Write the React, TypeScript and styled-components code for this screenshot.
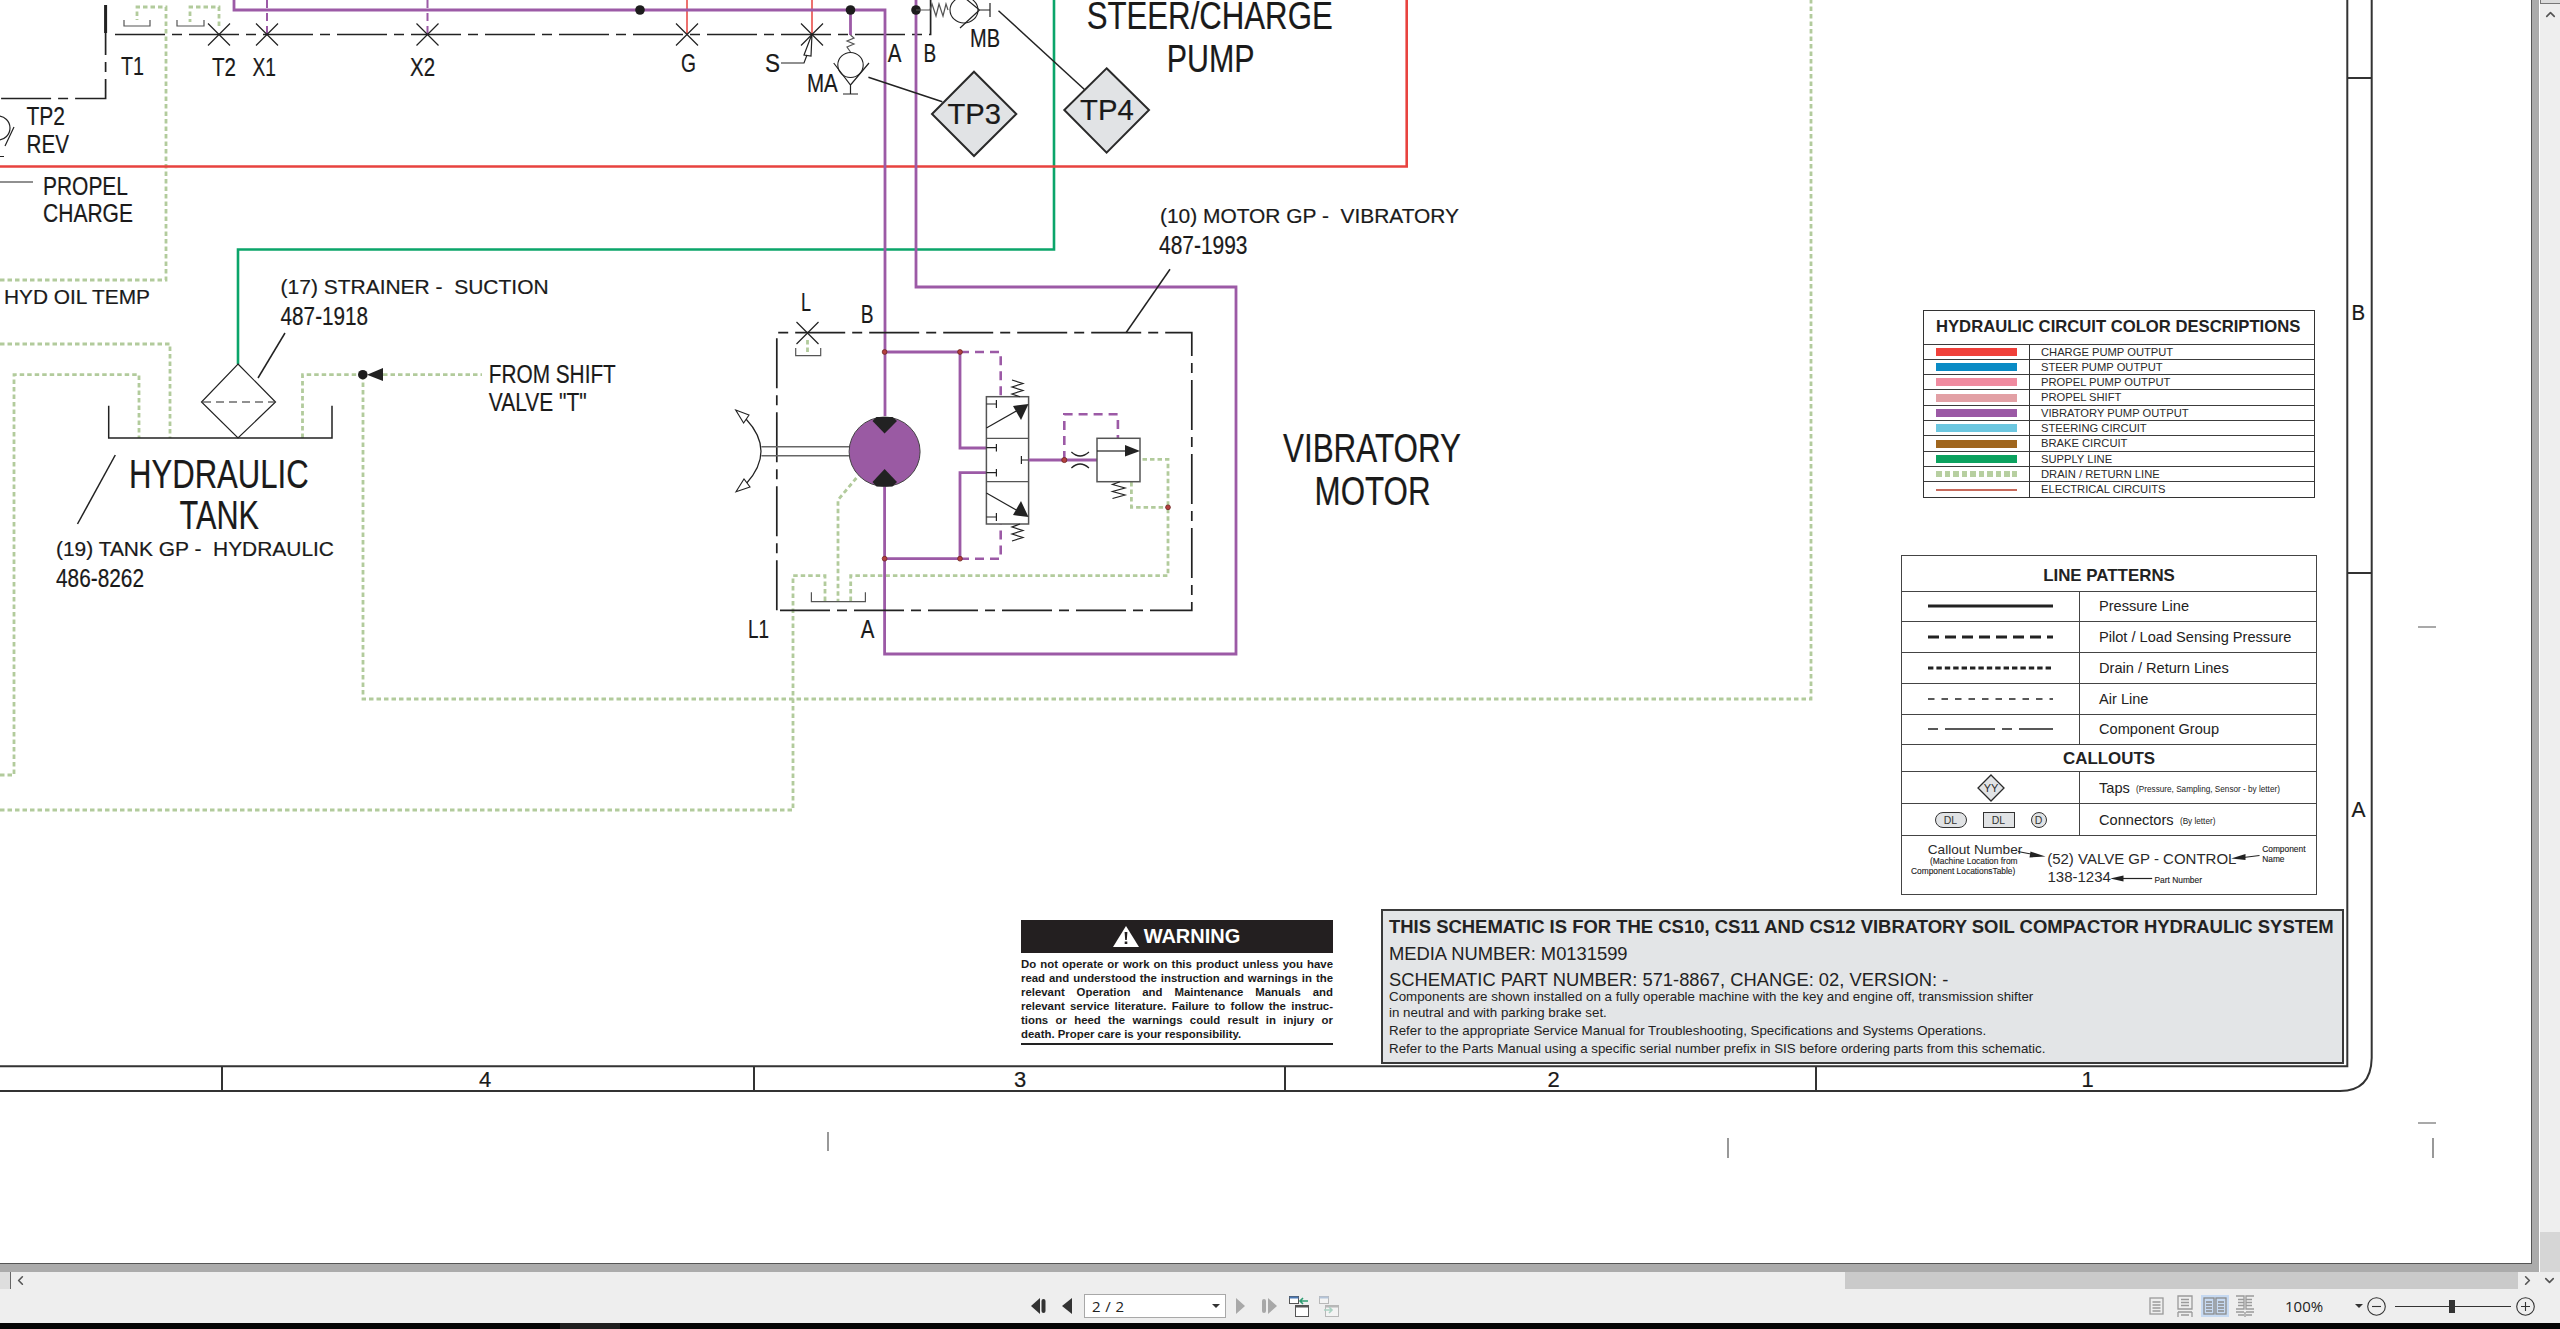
import React from "react";
import styled, { createGlobalStyle } from "styled-components";
import { ChevronLeft, ChevronRight, ChevronUp, ChevronDown } from "lucide-react";

const Global = createGlobalStyle`
  html, body { margin: 0; height: 100%; overflow: hidden; background: #000; }
  #root { height: 100%; }
  * { box-sizing: border-box; }
`;

const INK = "#232323";
const SANS = `"Liberation Sans", Arial, sans-serif`;

const Viewer = styled.div`
  height: 1329px;
  display: flex;
  flex-direction: column;
  font-family: ${SANS};
  color: ${INK};
`;
const Workspace = styled.div`
  height: 1272px;
  display: flex;
`;
const PageWell = styled.div`
  width: 2540px;
  background: #ababab;
  padding: 0 8px 8px 0;
  border-right: 1px solid #fff;
`;
const Sheet = styled.div`
  position: relative;
  width: 2532px;
  height: 1264px;
  background: #fff;
  border-right: 1px solid #555;
  border-bottom: 1px solid #555;
  overflow: hidden;
`;
const DrawingSvg = styled.svg`
  position: absolute;
  left: 0;
  top: 0;
`;

const VScroll = styled.div`
  width: 20px;
  background: #eeeeee;
  display: flex;
  flex-direction: column;
  align-items: center;
`;
const VNub = styled.div`
  width: 100%;
  height: 4px;
  background: #dcdcdc;
  border: 1px solid #777;
  border-top: 0;
  border-right: 0;
`;
const VThumb = styled.div`
  width: 100%;
  height: 40px;
  margin-top: auto;
  background: #d6d6d6;
`;
const ScrollArrow = styled.span`
  display: flex;
  color: #555;
  margin: ${(p: { $m?: string }) => p.$m || 0};
`;

const HScroll = styled.div`
  height: 17px;
  background: #eeeeee;
  display: flex;
  align-items: center;
`;
const HStub = styled.div`
  width: 11px;
  height: 17px;
  background: #dedede;
  border-right: 1px solid #666;
`;
const HThumb = styled.div`
  width: 673px;
  height: 17px;
  margin-left: auto;
  background: #cacaca;
`;
const HEnd = styled.div`
  width: 42px;
  height: 17px;
  display: flex;
  align-items: center;
  justify-content: space-between;
  padding-left: 2px;
`;

const StatusBar = styled.div`
  height: 34px;
  background: #eeeeee;
  display: flex;
  align-items: center;
`;
const NavGroup = styled.div`
  display: flex;
  align-items: center;
  margin-left: 1031px;
`;
const NavIcon = styled.svg<{ $m?: number }>`
  display: block;
  margin-left: ${(p) => p.$m || 0}px;
`;
const PageSelect = styled.div`
  width: 142px;
  height: 24px;
  margin-left: 12px;
  background: #fff;
  border: 1px solid #a8a8a8;
  display: flex;
  align-items: center;
  justify-content: space-between;
  padding: 0 5px 0 7px;
  font: 15px "Open Sans", sans-serif;
  color: #222;
  letter-spacing: 0.4px;
`;
const Caret = styled.span`
  width: 0;
  height: 0;
  border-left: 4px solid transparent;
  border-right: 4px solid transparent;
  border-top: 4px solid #333;
`;
const ViewGroup = styled.div`
  display: flex;
  align-items: center;
  margin-left: auto;
  padding-right: 25px;
`;
const ViewButton = styled.div<{ $active?: boolean; $m: number }>`
  width: ${(p) => (p.$active ? 28 : 20)}px;
  height: 22px;
  margin-left: ${(p) => p.$m}px;
  display: flex;
  align-items: center;
  justify-content: center;
  background: ${(p) => (p.$active ? "#c6d9f1" : "transparent")};
`;
const ZoomValue = styled.span`
  margin-left: 29px;
  width: 71px;
  padding-left: 1px;
  font: 15px "Open Sans", sans-serif;
  color: #222;
`;
const ZoomSlider = styled.div`
  position: relative;
  width: 116px;
  height: 1px;
  margin: 0 5px 0 9px;
  background: #333;
`;
const ZoomThumb = styled.div`
  position: absolute;
  left: 54px;
  top: -6px;
  width: 6px;
  height: 13px;
  background: #333;
`;
const ZoomDial = styled.svg`
  display: block;
`;
const BlackStrip = styled.div`
  height: 6px;
  background: #050505;
  display: flex;
`;
const StripTab = styled.div`
  width: 60px;
  margin-left: 560px;
  background: #1f1f1f;
`;

/* ----- schematic drawing parts ----- */
type PipeKind =
  | "pressure" | "pilot" | "branch" | "drain" | "charge" | "chargeThin"
  | "supply" | "group" | "ink" | "leader" | "frame" | "dashThin" | "shaft" | "hair";

const PIPES: Record<PipeKind, [string, number, string]> = {
  pressure: ["#9c5aa6", 2.8, "none"],
  pilot: ["#9c5aa6", 2.6, "9 6"],
  branch: ["#9c5aa6", 2, "8 5"],
  drain: ["#b2cb9c", 2.8, "4.5 3"],
  charge: ["#e8433f", 2.6, "none"],
  chargeThin: ["#e8433f", 1.5, "none"],
  supply: ["#0ba56a", 2.6, "none"],
  group: ["#222", 1.7, "50 7 10 7"],
  ink: ["#222", 1.2, "none"],
  leader: ["#222", 1.5, "none"],
  frame: ["#333", 2, "none"],
  dashThin: ["#222", 1.2, "8 5"],
  shaft: ["#666", 1.5, "none"],
  hair: ["#555", 1.2, "none"],
};
const Pipe = styled.path<{ $k: PipeKind }>`
  fill: none;
  stroke: ${(p) => PIPES[p.$k][0]};
  stroke-width: ${(p) => PIPES[p.$k][1]};
  stroke-dasharray: ${(p) => PIPES[p.$k][2]};
`;
const Label = styled.text.attrs({ lengthAdjust: "spacingAndGlyphs" as const })<{ $size: number }>`
  font-family: ${SANS};
  font-size: ${(p) => p.$size}px;
  fill: #1a1a1a;
  stroke: #1a1a1a;
  stroke-width: 0.2;
`;
const SmallLabel = styled.text`
  font-family: ${SANS};
  font-size: 8.4px;
  fill: #222;
  stroke: #222;
  stroke-width: 0.12;
`;
const Junction = styled.circle`
  fill: #1d1d1d;
`;
const Node = styled.circle`
  fill: #b5403f;
  stroke: #6d2522;
  stroke-width: 0.8;
`;
const Solid = styled.polygon`
  fill: #222;
`;
const Outline = styled.polygon`
  fill: #fff;
  stroke: #222;
  stroke-width: 1.1;
`;
const TapDiamond = styled.polygon`
  fill: #e1e3e5;
  stroke: #2a2a2a;
  stroke-width: 2;
`;
const ValveBody = styled.rect`
  fill: #fff;
  stroke: #555;
  stroke-width: 1.5;
`;
const MotorBody = styled.ellipse`
  fill: #9a5aa3;
  stroke: #444;
  stroke-width: 1;
`;
const GaugeBody = styled.ellipse`
  fill: #fff;
  stroke: #222;
  stroke-width: 1.1;
`;

const Cross = ({ x, y }: { x: number; y: number }) => (
  <Pipe $k="ink" d={`M${x - 11} ${y - 11}L${x + 11} ${y + 11}M${x + 11} ${y - 11}L${x - 11} ${y + 11}`} />
);
const Tray = ({ l, r, t, b }: { l: number; r: number; t: number; b: number }) => (
  <Pipe $k="hair" d={`M${l} ${t}V${b}H${r}V${t}`} />
);

const Schematic = () => (
  <DrawingSvg width={2532} height={1264} viewBox="0 0 2532 1264">
    {/* drain network */}
    <Pipe $k="drain" d="M0 280H166V7H137V20" />
    <Pipe $k="drain" d="M219 26V7H190V22" />
    <Pipe $k="drain" d="M0 344H170V438" />
    <Pipe $k="drain" d="M0 775H14V374.7H139V438" />
    <Pipe $k="drain" d="M302.5 438V374.7H363" />
    <Pipe $k="drain" d="M383 374.7H482" />
    <Pipe $k="drain" d="M363 375V699H1811V0" />
    <Pipe $k="drain" d="M0 810H793V575.7H825V601" />
    <Pipe $k="drain" d="M850.7 601V575.7H1168V459.3H1140" />
    <Pipe $k="drain" d="M1131.4 482V507.3H1168" />
    <Pipe $k="drain" d="M856.4 478L838 500V601" />
    <Pipe $k="drain" d="M807.5 340V355" />

    {/* supply, charge */}
    <Pipe $k="supply" d="M238 364V249.5H1054V0" />
    <Pipe $k="charge" d="M0 166.5H1406.7V0" />
    <Pipe $k="chargeThin" d="M687 0V34M812 0V34" />

    {/* top component group */}
    <Pipe $k="group" d="M105.6 5V98.5H0" />
    <Pipe $k="leader" d="M105.6 5V33" style={{ strokeWidth: 3 }} />
    <Pipe $k="group" d="M115 34.5H930.6V0" />

    {/* vibratory circuit */}
    <Pipe $k="branch" d="M267 0V34M427.5 0V34" />
    <Pipe $k="pressure" d="M234 0V10H885V416" />
    <Pipe $k="pressure" d="M916 0V287H1236V654H884.6V486" />
    <Pipe $k="pressure" d="M850.5 10V35" />
    <Junction cx={640} cy={10} r={4.8} />
    <Junction cx={850.5} cy={10} r={4.8} />
    <Junction cx={916} cy={10} r={4.8} />

    {[219, 267, 427.5, 687, 812].map((x) => (
      <Cross key={x} x={x} y={34.5} />
    ))}
    <Tray l={124} r={150} t={20} b={26} />
    <Tray l={177} r={204} t={20} b={26} />

    {/* S port arrow */}
    <Pipe $k="ink" d="M781 63H804L807 55" />
    <Pipe $k="ink" d="M812 34L804 55L811 56Z" />

    {/* MA gauge */}
    <Pipe $k="hair" d="M850.5 35L854 38L847 41L854 44L847 47L850.5 52" />
    <GaugeBody cx={850.5} cy={65} rx={12.7} ry={12.5} />
    <Pipe $k="ink" d="M833.7 63L850.5 85L869 63M850.5 85V94M843 94H858" />

    {/* MB gauge */}
    <Pipe $k="hair" d="M916 10H930L932 4L936 16L939 4L943 16L946 4L948 10" />
    <GaugeBody cx={964} cy={10} rx={14} ry={13} />
    <Pipe $k="ink" d="M960 -6L979.5 10L960 28M979.5 10H990M990 3V17" />

    {/* test point callouts */}
    <Pipe $k="leader" d="M868.4 77.3L942.3 101.7" />
    <Pipe $k="leader" d="M998.5 10.7L1085 90" />
    <TapDiamond points="974,71.7 1016.3,114 974,156 932,114" />
    <TapDiamond points="1106.6,68.3 1149,110 1106.6,152.7 1064.3,110" />

    {/* TP2 */}
    <Pipe $k="ink" d="M-2 116A12 12 0 0 1 -2 140M14 127L5 146M0 156.5H4" />
    <Pipe $k="ink" d="M0 182H33" />

    {/* hydraulic tank and strainer */}
    <Pipe $k="leader" d="M285 333L258 378" />
    <Pipe $k="ink" d="M238 364L275.5 402L238 438L201.5 402Z" />
    <Pipe $k="dashThin" d="M203 402H274" />
    <Pipe $k="leader" d="M108.7 405.7V438H332V405.7" />
    <Pipe $k="leader" d="M115.3 455L77.5 524" />
    <Junction cx={362.8} cy={374.7} r={4.8} />
    <Solid points="367,374.7 383,368 383,381" />

    {/* motor group */}
    <Pipe $k="leader" d="M1170 269.3L1126 332.7" />
    <Pipe $k="group" d="M776.8 610.3V332.7H1191.8V610.3Z" />
    <Cross x={807.5} y={333} />
    <Tray l={795.7} r={820.7} t={348} b={355.7} />
    <Tray l={811.4} r={865.4} t={592.3} b={601.6} />

    <Pipe $k="shaft" d="M761.4 446.7H850M761.4 455.7H850" />
    <Pipe $k="ink" d="M746 419Q776 451 746 484" />
    <Outline points="735.7,410 749,415 743.6,423" />
    <Outline points="736,491.7 744,479 750,487" />

    <Pipe $k="pressure" d="M884.6 352H960V448H986.4" />
    <Pipe $k="pressure" d="M884.6 558.7H960V472.7H986.4" />
    <Pipe $k="pilot" d="M960 352H1000.7V396.7" />
    <Pipe $k="pilot" d="M960 558.7H1000.7V524" />

    <MotorBody cx={884.6} cy={451.7} rx={35.5} ry={34.7} />
    <Solid points="876.5,417 892.5,417 897,421 884.6,433.5 872.5,421" />
    <Solid points="872.5,482 884.6,469 897,482 892.5,486.5 876.5,486.5" />

    {/* directional valve */}
    <ValveBody x={986.4} y={396.7} width={42.2} height={127.3} />
    <Pipe $k="hair" d="M986.4 438.3H1028.6M986.4 481.7H1028.6" />
    <Pipe $k="ink" d="M986.4 428L1018 410" />
    <Solid points="1028.5,404 1021,420 1013,406" />
    <Pipe $k="ink" d="M986.4 493L1018 511" />
    <Solid points="1028.5,517 1013,515 1021,501" />
    <Pipe $k="ink" d="M986.4 404H996.4M996.4 400V408M986.4 447.7H996.4M996.4 444V451.5M986.4 472.7H996.4M996.4 469V476.5M986.4 517H996.4M996.4 513V521M1028.6 460H1021.4M1021.4 456V464" />
    <Pipe $k="ink" d="M1012 380L1023 383.5L1012 387L1023 390.5L1012 394L1020 396.7" />
    <Pipe $k="ink" d="M1020 524L1012 527L1023 530.5L1012 534L1023 537.5L1012 541" />

    {/* relief valve */}
    <Pipe $k="pressure" d="M1028.6 460H1097" />
    <Pipe $k="pilot" d="M1064.3 460V414.3H1117.9V438.3" />
    <Pipe $k="ink" d="M1071.4 452Q1080 460 1089 452M1071.4 468Q1080 460 1089 468" />
    <ValveBody x={1097} y={438.3} width={43} height={43.4} />
    <Pipe $k="ink" d="M1097 451H1126" />
    <Solid points="1140,451 1125,445 1125,456.5" />
    <Pipe $k="ink" d="M1120 481.7L1112.5 484.5L1125 488L1112.5 491.5L1125 495L1112.5 498.5" />

    <Node cx={884.6} cy={352} r={2.4} />
    <Node cx={960} cy={352} r={2.4} />
    <Node cx={884.6} cy={558.7} r={2.4} />
    <Node cx={960} cy={558.7} r={2.4} />
    <Node cx={1064.3} cy={460} r={2.6} />
    <Node cx={1168} cy={507.3} r={2.4} />

    {/* sheet frame */}
    <Pipe $k="frame" d="M2347.3 0V1066.3H0" />
    <Pipe $k="frame" d="M2371.7 0V1058Q2371 1091 2340 1091H0" />
    <Pipe $k="frame" d="M2347.3 78H2371.7M2347.3 573H2371.7" />
    <Pipe $k="frame" d="M222 1066V1091M754 1066V1091M1285 1066V1091M1816 1066V1091" />

    {/* registration ticks */}
    <Pipe $k="hair" d="M828 1132V1151M1728 1138V1158M2433 1138V1158M2418 627H2436M2418 1123H2436" />

    {/* labels */}
    <Label x={121} y={75} $size={26} textLength={23}>T1</Label>
    <Label x={212} y={76} $size={26} textLength={24}>T2</Label>
    <Label x={252.5} y={76} $size={26} textLength={23.5}>X1</Label>
    <Label x={410} y={76} $size={26} textLength={25}>X2</Label>
    <Label x={681} y={72} $size={26} textLength={15}>G</Label>
    <Label x={765} y={72} $size={26} textLength={15}>S</Label>
    <Label x={26.5} y={125} $size={26} textLength={38.5}>TP2</Label>
    <Label x={26.5} y={153} $size={26} textLength={42.5}>REV</Label>
    <Label x={43} y={195} $size={26} textLength={85}>PROPEL</Label>
    <Label x={43} y={222} $size={26} textLength={90}>CHARGE</Label>
    <Label x={4} y={304} $size={21} textLength={146}>HYD OIL TEMP</Label>
    <Label x={280.6} y={294} $size={21} textLength={268} xmlSpace="preserve">(17) STRAINER -  SUCTION</Label>
    <Label x={280.6} y={325} $size={25.5} textLength={87.5}>487-1918</Label>
    <Label x={488.8} y={382.7} $size={26} textLength={127}>FROM SHIFT</Label>
    <Label x={488.8} y={410.7} $size={26} textLength={98}>VALVE "T"</Label>
    <Label x={129} y={487.7} $size={40} textLength={179.7}>HYDRAULIC</Label>
    <Label x={179.6} y={529.3} $size={40} textLength={79.4}>TANK</Label>
    <Label x={56} y={556} $size={21} textLength={278} xmlSpace="preserve">(19) TANK GP -  HYDRAULIC</Label>
    <Label x={56} y={587} $size={25.5} textLength={88}>486-8262</Label>
    <Label x={748} y={638} $size={26} textLength={21}>L1</Label>
    <Label x={860.7} y={638.3} $size={26} textLength={13.6}>A</Label>
    <Label x={801} y={310.7} $size={26} textLength={10}>L</Label>
    <Label x={860.7} y={323} $size={26} textLength={12.8}>B</Label>
    <Label x={887.8} y={61.7} $size={26} textLength={13.7}>A</Label>
    <Label x={923.5} y={61.7} $size={26} textLength={12.7}>B</Label>
    <Label x={807} y={92.3} $size={26} textLength={30.8}>MA</Label>
    <Label x={970} y={47} $size={26} textLength={30}>MB</Label>
    <Label x={947.4} y={124} $size={30} textLength={53.6}>TP3</Label>
    <Label x={1080} y={120} $size={30} textLength={53.7}>TP4</Label>
    <Label x={1086.7} y={29} $size={38.5} textLength={246}>STEER/CHARGE</Label>
    <Label x={1166.8} y={72.3} $size={38.5} textLength={87.8}>PUMP</Label>
    <Label x={1160} y={222.7} $size={21} textLength={299} xmlSpace="preserve">(10) MOTOR GP -  VIBRATORY</Label>
    <Label x={1159} y={254} $size={25.5} textLength={88.5}>487-1993</Label>
    <Label x={1283} y={462} $size={40} textLength={178}>VIBRATORY</Label>
    <Label x={1314.6} y={504.6} $size={40} textLength={116}>MOTOR</Label>
    <Label x={2351.4} y={320} $size={22} textLength={13.6}>B</Label>
    <Label x={2351.4} y={817} $size={22} textLength={14}>A</Label>
    <Label x={485} y={1086.7} $size={22} textAnchor="middle">4</Label>
    <Label x={1020} y={1086.7} $size={22} textAnchor="middle">3</Label>
    <Label x={1553.6} y={1086.7} $size={22} textAnchor="middle">2</Label>
    <Label x={2087.5} y={1086.7} $size={22} textAnchor="middle">1</Label>
  </DrawingSvg>
);

/* ----- colour legend ----- */
const ColorTable = styled.div`
  position: absolute;
  left: 1923px;
  top: 310px;
  width: 392px;
  height: 188px;
  border: 1.5px solid #333;
  background: #fff;
`;
const ColorTitle = styled.div`
  height: 32.5px;
  line-height: 32px;
  padding-left: 12px;
  font-weight: 700;
  font-size: 16.65px;
  color: #222;
  white-space: nowrap;
`;
const ColorRow = styled.div`
  height: 15.33px;
  display: grid;
  grid-template-columns: 106px 1fr;
  border-top: 1.5px solid #3c3c3c;
`;
const SwatchCell = styled.div`
  display: flex;
  align-items: center;
  padding-left: 11.5px;
  border-right: 1.2px solid #333;
`;
const Swatch = styled.div<{ $color: string; $kind?: "drain" | "wire" }>`
  width: 81px;
  height: ${(p) => (p.$kind === "wire" ? 2 : p.$kind === "drain" ? 6 : 8)}px;
  background: ${(p) =>
    p.$kind === "drain"
      ? `repeating-linear-gradient(90deg, ${p.$color} 0 5.5px, transparent 5.5px 8.5px)`
      : p.$color};
`;
const ColorName = styled.div`
  padding-left: 11px;
  font-size: 11.2px;
  line-height: 14px;
  color: #2a2a2a;
  white-space: nowrap;
`;

const COLOR_ROWS: { c: string; n: string; k?: "drain" | "wire" }[] = [
  { c: "#f0403a", n: "CHARGE PUMP OUTPUT" },
  { c: "#0a8bc5", n: "STEER PUMP OUTPUT" },
  { c: "#f08ba0", n: "PROPEL PUMP OUTPUT" },
  { c: "#e2a0a5", n: "PROPEL SHIFT" },
  { c: "#9b59a5", n: "VIBRATORY PUMP OUTPUT" },
  { c: "#6cc7e0", n: "STEERING CIRCUIT" },
  { c: "#a0661e", n: "BRAKE CIRCUIT" },
  { c: "#0ba25f", n: "SUPPLY LINE" },
  { c: "#b7cfa0", n: "DRAIN / RETURN LINE", k: "drain" },
  { c: "#c76a5c", n: "ELECTRICAL CIRCUITS", k: "wire" },
];

/* ----- line pattern legend ----- */
const PatternTable = styled.div`
  position: absolute;
  left: 1901px;
  top: 555px;
  width: 416px;
  height: 340px;
  border: 1.5px solid #444;
  background: #fff;
`;
const PatternHeading = styled.div<{ $h: number }>`
  height: ${(p) => p.$h}px;
  line-height: ${(p) => (p.$h < 30 ? p.$h + 1 : p.$h + 5)}px;
  text-align: center;
  font-weight: 700;
  font-size: 16.9px;
  color: #222;
  border-top: ${(p) => (p.$h < 30 ? "1.5px solid #444" : "0")};
`;
const PatternRow = styled.div<{ $h: number }>`
  height: ${(p) => p.$h}px;
  display: grid;
  grid-template-columns: 178px 1fr;
  border-top: 1.5px solid #444;
`;
const SymbolCell = styled.div`
  display: flex;
  align-items: center;
  justify-content: center;
  gap: 16px;
  border-right: 1.5px solid #444;
`;
const PatternName = styled.div`
  display: flex;
  align-items: center;
  gap: 4px;
  padding-left: 19px;
  font-size: 14.6px;
  color: #222;
  white-space: nowrap;
`;
const Fine = styled.span`
  font-size: 8.2px;
  padding-top: 3px;
  color: #222;
`;
const ConnectorPill = styled.div`
  width: 32px;
  height: 16px;
  border: 1.2px solid #333;
  border-radius: 8px;
  background: #e1e3e5;
  font-size: 10.5px;
  line-height: 14px;
  text-align: center;
  color: #333;
`;
const ConnectorBox = styled(ConnectorPill)`
  border-radius: 0;
`;
const ConnectorRound = styled(ConnectorPill)`
  width: 16px;
  border-radius: 50%;
  margin-left: 0;
`;
const PatternLine = ({ w, dash }: { w: number; dash?: string }) => (
  <svg width={125} height={6}>
    <line x1={0} x2={125} y1={3} y2={3} stroke="#222" strokeWidth={w} strokeDasharray={dash || "none"} />
  </svg>
);
const CalloutRow = styled.div`
  height: 58px;
  border-top: 1.5px solid #444;
`;
const CalloutText = styled.text<{ $size: number }>`
  font-family: ${SANS};
  font-size: ${(p) => p.$size}px;
  fill: #2a2a2a;
`;

/* ----- warning ----- */
const WarningPlate = styled.div`
  position: absolute;
  left: 1021px;
  top: 920px;
  width: 312px;
`;
const WarningHead = styled.div`
  height: 33px;
  background: #231f20;
  color: #fff;
  display: flex;
  align-items: center;
  justify-content: center;
  gap: 5px;
  font-weight: 700;
  font-size: 20px;
  padding-right: 1px;
`;
const WarningBody = styled.div`
  padding-top: 4px;
  padding-bottom: 2px;
  border-bottom: 2px solid #222;
  font-weight: 700;
  font-size: 11.4px;
  line-height: 14px;
  color: #1a1a1a;
`;
const WarningLine = styled.div<{ $last?: boolean }>`
  text-align: justify;
  text-align-last: ${(p) => (p.$last ? "left" : "justify")};
`;

/* ----- title note ----- */
const NotePlate = styled.div`
  position: absolute;
  left: 1381px;
  top: 909px;
  width: 963px;
  height: 155px;
  background: #e3e5e7;
  border: 2px solid #3a3a3a;
  padding: 7px 0 0 6px;
  color: #222;
  white-space: nowrap;
`;
const NoteTitle = styled.div`
  font-weight: 700;
  font-size: 18.47px;
  line-height: 18.5px;
`;
const NoteBig = styled.div<{ $m: number }>`
  font-size: 18.35px;
  line-height: 22px;
  margin-top: ${(p) => p.$m}px;
`;
const NoteSmall = styled.div<{ $m: number }>`
  font-size: 13.33px;
  line-height: 16px;
  margin-top: ${(p) => p.$m}px;
`;

/* ----- toolbar glyphs ----- */
const PageGlyph = ({ kind }: { kind: 1 | 2 | 3 | 4 }) => {
  const c = "#9a9a9a";
  if (kind === 1)
    return (
      <svg width={15} height={18} fill="none" stroke={c} strokeWidth={1.3}>
        <rect x={1} y={1} width={13} height={16} />
        <path d="M3.5 5H11.5M3.5 8H11.5M3.5 11H11.5M3.5 14H11.5" />
      </svg>
    );
  if (kind === 2)
    return (
      <svg width={16} height={22} fill="none" stroke={c} strokeWidth={1.3}>
        <path d="M1 1H15V14H1ZM4 4.5H12M4 7.5H12M4 10.5H12M1 17H15M1 17V22M15 17V22M4 20H12" />
      </svg>
    );
  if (kind === 3)
    return (
      <svg width={24} height={18} fill="none" stroke="#8a8a8a" strokeWidth={1.3}>
        <rect x={1} y={1} width={10} height={16} />
        <rect x={13} y={1} width={10} height={16} />
        <path d="M3 5H9M3 8H9M3 11H9M3 14H9M15 5H21M15 8H21M15 11H21M15 14H21" />
      </svg>
    );
  return (
    <svg width={20} height={22} fill="none" stroke={c} strokeWidth={1.3}>
      <path d="M1 1H9V14H1M19 1H11V14H19M3 4.5H9M3 7.5H9M3 10.5H9M11 4.5H17M11 7.5H17M11 10.5H17M1 17H9M11 17H19M10 17V22M3 20H9M11 20H17" />
    </svg>
  );
};

const ViewSwap = ({ faded, m }: { faded?: boolean; m: number }) => (
  <NavIcon $m={m} width={20} height={21} viewBox="0 0 20 21" style={{ opacity: faded ? 0.35 : 1 }}>
    <rect x={0.5} y={0.5} width={9} height={7} fill="#fff" stroke="#555" />
    <rect x={0.5} y={0.5} width={9} height={2} fill="#4a78b5" />
    <rect x={6.5} y={9.5} width={13} height={11} fill="#fff" stroke="#555" />
    <rect x={6.5} y={9.5} width={13} height={2} fill="#555" />
    <path d={faded ? "M5 14H13M10 11L13 14L10 17" : "M19 5H11M14 2L11 5L14 8"} fill="none" stroke="#2f9e73" strokeWidth={1.6} />
  </NavIcon>
);

export default function App() {
  return (
    <Viewer>
      <Global />
      <Workspace>
        <PageWell>
          <Sheet>
            <Schematic />

            <ColorTable>
              <ColorTitle>HYDRAULIC CIRCUIT COLOR DESCRIPTIONS</ColorTitle>
              {COLOR_ROWS.map((r) => (
                <ColorRow key={r.n}>
                  <SwatchCell>
                    <Swatch $color={r.c} $kind={r.k} />
                  </SwatchCell>
                  <ColorName>{r.n}</ColorName>
                </ColorRow>
              ))}
            </ColorTable>

            <PatternTable>
              <PatternHeading $h={34.5}>LINE PATTERNS</PatternHeading>
              <PatternRow $h={30.3}>
                <SymbolCell><PatternLine w={3} /></SymbolCell>
                <PatternName>Pressure Line</PatternName>
              </PatternRow>
              <PatternRow $h={31}>
                <SymbolCell><PatternLine w={3} dash="11 6" /></SymbolCell>
                <PatternName>Pilot / Load Sensing Pressure</PatternName>
              </PatternRow>
              <PatternRow $h={31}>
                <SymbolCell><PatternLine w={3} dash="5.4 3" /></SymbolCell>
                <PatternName>Drain / Return Lines</PatternName>
              </PatternRow>
              <PatternRow $h={31}>
                <SymbolCell><PatternLine w={1.3} dash="6.5 7" /></SymbolCell>
                <PatternName>Air Line</PatternName>
              </PatternRow>
              <PatternRow $h={30}>
                <SymbolCell><PatternLine w={1.6} dash="10 7 50 7" /></SymbolCell>
                <PatternName>Component Group</PatternName>
              </PatternRow>
              <PatternHeading $h={27.4}>CALLOUTS</PatternHeading>
              <PatternRow $h={32.3}>
                <SymbolCell>
                  <svg width={30} height={30} viewBox="0 0 30 30">
                    <TapDiamond points="15,2 28,15 15,28 2,15" style={{ strokeWidth: 1.3 }} />
                    <CalloutText x={15} y={19} $size={11} textAnchor="middle">YY</CalloutText>
                  </svg>
                </SymbolCell>
                <PatternName>Taps<Fine>&nbsp;(Pressure, Sampling, Sensor - by letter)</Fine></PatternName>
              </PatternRow>
              <PatternRow $h={32}>
                <SymbolCell>
                  <ConnectorPill>DL</ConnectorPill>
                  <ConnectorBox>DL</ConnectorBox>
                  <ConnectorRound>D</ConnectorRound>
                </SymbolCell>
                <PatternName>Connectors<Fine>&nbsp;(By letter)</Fine></PatternName>
              </PatternRow>
              <CalloutRow>
                <svg width={413} height={56} viewBox="1902.5 837.5 413 56">
                  <CalloutText x={1928.3} y={855} $size={13.6}>Callout Number</CalloutText>
                  <SmallLabel x={1930.5} y={865}>(Machine Location from</SmallLabel>
                  <SmallLabel x={1911.5} y={875}>Component LocationsTable)</SmallLabel>
                  <CalloutText x={2047.7} y={865} $size={15}>(52) VALVE GP - CONTROL</CalloutText>
                  <CalloutText x={2048} y={883} $size={15}>138-1234</CalloutText>
                  <SmallLabel x={2262.7} y={853.7}>Component</SmallLabel>
                  <SmallLabel x={2262.7} y={863.7}>Name</SmallLabel>
                  <SmallLabel x={2155} y={884}>Part Number</SmallLabel>
                  <Pipe $k="ink" d="M2018.3 853L2034 856" />
                  <Solid points="2046,858 2031,853 2030,859" />
                  <Pipe $k="ink" d="M2260 857L2244 859" />
                  <Solid points="2231.7,860 2246,855.5 2246,861.5" />
                  <Pipe $k="ink" d="M2152.7 880H2122" />
                  <Solid points="2110.7,880 2124,877 2124,883" />
                </svg>
              </CalloutRow>
            </PatternTable>

            <WarningPlate>
              <WarningHead>
                <svg width={26} height={21} viewBox="0 0 26 21">
                  <path d="M13 0L26 21H0Z" fill="#fff" />
                  <path d="M11.6 6H14.4L13.8 14H12.2ZM11.7 15.5H14.3V18H11.7Z" fill="#231f20" />
                </svg>
                WARNING
              </WarningHead>
              <WarningBody>
                <WarningLine>Do not operate or work on this product unless you have</WarningLine>
                <WarningLine>read and understood the instruction and warnings in the</WarningLine>
                <WarningLine>relevant Operation and Maintenance Manuals and</WarningLine>
                <WarningLine>relevant service literature. Failure to follow the instruc-</WarningLine>
                <WarningLine>tions or heed the warnings could result in injury or</WarningLine>
                <WarningLine $last>death. Proper care is your responsibility.</WarningLine>
              </WarningBody>
            </WarningPlate>

            <NotePlate>
              <NoteTitle>THIS SCHEMATIC IS FOR THE CS10, CS11 AND CS12 VIBRATORY SOIL COMPACTOR HYDRAULIC SYSTEM</NoteTitle>
              <NoteBig $m={6.8}>MEDIA NUMBER: M0131599</NoteBig>
              <NoteBig $m={3.7}>SCHEMATIC PART NUMBER: 571-8867, CHANGE: 02, VERSION: -</NoteBig>
              <NoteSmall $m={-2}>Components are shown installed on a fully operable machine with the key and engine off, transmission shifter</NoteSmall>
              <NoteSmall $m={0}>in neutral and with parking brake set.</NoteSmall>
              <NoteSmall $m={2.4}>Refer to the appropriate Service Manual for Troubleshooting, Specifications and Systems Operations.</NoteSmall>
              <NoteSmall $m={1.7}>Refer to the Parts Manual using a specific serial number prefix in SIS before ordering parts from this schematic.</NoteSmall>
            </NotePlate>
          </Sheet>
        </PageWell>
        <VScroll>
          <VNub />
          <ScrollArrow $m="3px 0 0 0"><ChevronUp size={15} strokeWidth={2.6} /></ScrollArrow>
          <VThumb />
        </VScroll>
      </Workspace>

      <HScroll>
        <HStub />
        <ScrollArrow $m="0 0 0 2px"><ChevronLeft size={15} strokeWidth={2.6} /></ScrollArrow>
        <HThumb />
        <HEnd>
          <ScrollArrow><ChevronRight size={15} strokeWidth={2.6} /></ScrollArrow>
          <ScrollArrow $m="0 3px 0 0"><ChevronDown size={15} strokeWidth={2.6} /></ScrollArrow>
        </HEnd>
      </HScroll>

      <StatusBar>
        <NavGroup>
          <NavIcon width={15} height={16} viewBox="0 0 15 16">
            <path d="M0 8L9 0V16Z" fill="#333" />
            <rect x={10.5} y={1} width={4} height={14} rx={2} fill="#333" />
          </NavIcon>
          <NavIcon $m={16} width={10} height={16} viewBox="0 0 10 16">
            <path d="M0 8L10 0V16Z" fill="#333" />
          </NavIcon>
          <PageSelect>
            2 / 2
            <Caret />
          </PageSelect>
          <NavIcon $m={10} width={9} height={16} viewBox="0 0 9 16">
            <path d="M9 8L0 0V16Z" fill="#a8a8a8" />
          </NavIcon>
          <NavIcon $m={17} width={15} height={16} viewBox="0 0 15 16">
            <rect x={0} y={1} width={4} height={14} rx={2} fill="#a8a8a8" />
            <path d="M15 8L6 0V16Z" fill="#a8a8a8" />
          </NavIcon>
          <ViewSwap m={12} />
          <ViewSwap m={10} faded />
        </NavGroup>
        <ViewGroup>
          <ViewButton $m={0}><PageGlyph kind={1} /></ViewButton>
          <ViewButton $m={9}><PageGlyph kind={2} /></ViewButton>
          <ViewButton $m={6} $active><PageGlyph kind={3} /></ViewButton>
          <ViewButton $m={6}><PageGlyph kind={4} /></ViewButton>
          <ZoomValue>100%</ZoomValue>
          <Caret />
          <ZoomDial width={19} height={19} viewBox="0 0 19 19" style={{ marginLeft: 4 }}>
            <circle cx={9.5} cy={9.5} r={8.8} fill="none" stroke="#333" strokeWidth={1.1} />
            <path d="M5 9.5H14" stroke="#333" strokeWidth={1.1} />
          </ZoomDial>
          <ZoomSlider><ZoomThumb /></ZoomSlider>
          <ZoomDial width={19} height={19} viewBox="0 0 19 19">
            <circle cx={9.5} cy={9.5} r={8.8} fill="none" stroke="#333" strokeWidth={1.1} />
            <path d="M5 9.5H14M9.5 5V14" stroke="#333" strokeWidth={1.1} />
          </ZoomDial>
        </ViewGroup>
      </StatusBar>
      <BlackStrip><StripTab /></BlackStrip>
    </Viewer>
  );
}
